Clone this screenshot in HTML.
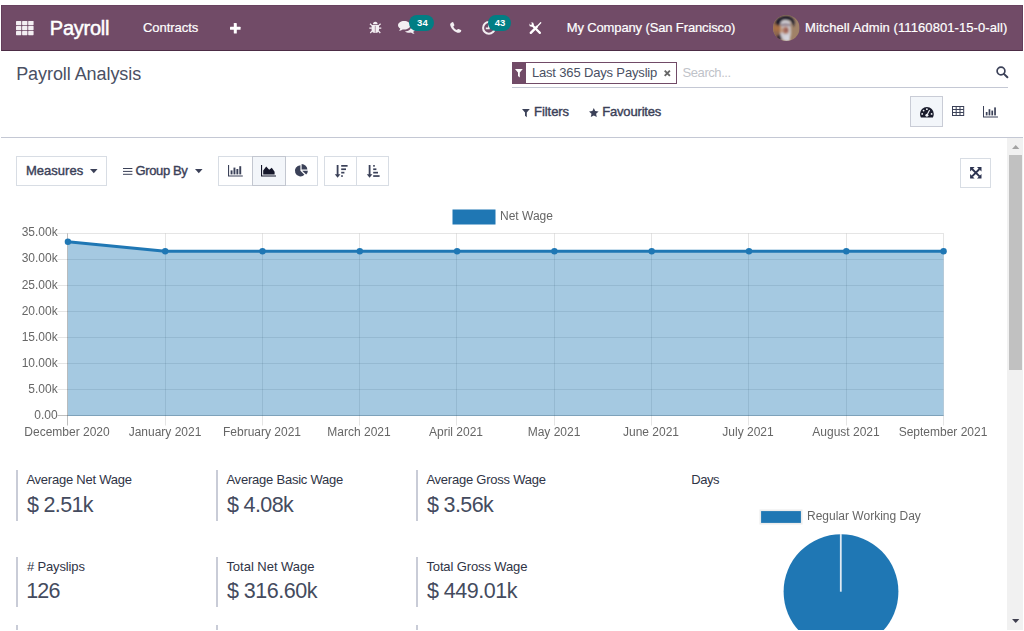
<!DOCTYPE html>
<html><head><meta charset="utf-8"><title>Payroll Analysis</title>
<style>
html,body{margin:0;padding:0;background:#fff;}
body{width:1024px;height:631px;position:relative;overflow:hidden;font-family:"Liberation Sans",sans-serif;}
.t{position:absolute;white-space:pre;font-family:"Liberation Sans",sans-serif;}
.a{position:absolute;}
svg{position:absolute;overflow:visible;}
.c{font-size:12px;line-height:14px;color:#666;will-change:transform;}
.bar{width:2px;background:#c9ccd7;}
#root{position:absolute;left:0;top:0;width:1024px;height:631px;overflow:hidden;background:#fff;}

</style></head>
<body>
<div id="root">
<!-- NAVBAR -->
<div class="a" style="left:1px;top:5px;width:1022px;height:46px;background:#714b67;border:1px solid #643e5b;border-top-color:#68425f;border-bottom-color:#4c2c45;box-sizing:border-box"></div>
<!-- apps grid -->
<svg style="left:15.7px;top:20.8px" width="17.6" height="14.2" viewBox="0 0 17.6 14.2" fill="#f3eef2">
<rect x="0" y="0" width="5.3" height="4.2" rx=".6"/><rect x="6.1" y="0" width="5.3" height="4.2" rx=".6"/><rect x="12.2" y="0" width="5.4" height="4.2" rx=".6"/>
<rect x="0" y="5" width="5.3" height="4.2" rx=".6"/><rect x="6.1" y="5" width="5.3" height="4.2" rx=".6"/><rect x="12.2" y="5" width="5.4" height="4.2" rx=".6"/>
<rect x="0" y="10" width="5.3" height="4.2" rx=".6"/><rect x="6.1" y="10" width="5.3" height="4.2" rx=".6"/><rect x="12.2" y="10" width="5.4" height="4.2" rx=".6"/>
</svg>
<!-- plus -->
<svg style="left:230.3px;top:22.8px" width="10.6" height="10.4" viewBox="0 0 10.6 10.4" fill="#fff">
<rect x="3.8" y="0" width="3" height="10.4" rx=".5"/><rect x="0" y="3.7" width="10.6" height="3" rx=".5"/>
</svg>
<!-- bug -->
<svg style="left:368.6px;top:21.4px" width="12.6" height="13" viewBox="0 0 12.6 13" fill="#f3eef2" stroke="#f3eef2">
<path d="M4 3.3 A2.3 2.6 0 0 1 8.6 3.3 Z" stroke="none"/>
<path d="M2.6 4 H10 V8.4 A3.7 3.6 0 0 1 2.6 8.4 Z" stroke="none"/>
<path d="M6.3 4.8 V11.8" stroke="#a98a9c" stroke-width="0.9"/>
<path d="M2.8 7.2 H0.3 M9.8 7.2 H12.3 M3 4.6 L1 2.7 M9.6 4.6 L11.6 2.7 M3.2 9.8 L1.3 12 M9.4 9.8 L11.3 12" stroke-width="1.2" fill="none"/>
</svg>
<!-- comments -->
<svg style="left:397.5px;top:21px" width="17.5" height="13.5" viewBox="0 0 17.5 13.5" fill="#f3eef2">
<path d="M6.2 0 C9.6 0 12.3 1.9 12.3 4.3 C12.3 6.7 9.6 8.6 6.2 8.6 C5.6 8.6 5.1 8.5 4.6 8.4 C3.6 9.2 2.3 9.7 0.9 9.8 C1.6 9.2 2.1 8.4 2.3 7.6 C0.9 6.8 0 5.6 0 4.3 C0 1.9 2.8 0 6.2 0 Z"/>
<path d="M13.6 3.6 C15.9 4.2 17.5 5.7 17.5 7.5 C17.5 8.8 16.6 10 15.2 10.8 C15.4 11.6 15.9 12.4 16.6 13 C15.2 12.9 13.9 12.4 12.9 11.6 C12.4 11.7 11.9 11.8 11.3 11.8 C9.6 11.8 8 11.3 6.9 10.5 C10.6 10.3 13.7 7.8 13.7 4.5 C13.7 4.2 13.7 3.9 13.6 3.6 Z"/>
</svg>
<!-- badge 34 -->
<div class="a" style="left:409px;top:15px;width:25px;height:16px;border-radius:8px;background:#017e84"></div>
<!-- phone -->
<svg style="left:449.8px;top:22.2px" width="11.4" height="11" viewBox="0 0 11.4 11" fill="#f3eef2">
<path d="M2.4 0.2 C2.8 0 3.1 0.1 3.3 0.5 L4.3 2.7 C4.5 3.1 4.4 3.4 4.1 3.7 L3.3 4.4 C4 6 5.2 7.3 6.9 8.1 L7.6 7.3 C7.9 7 8.2 6.9 8.6 7.1 L10.9 8.1 C11.3 8.3 11.4 8.6 11.2 9 C10.8 9.9 10.1 10.6 9.2 10.8 C8.3 11 7.4 10.8 6.4 10.3 C3.6 9 1.7 7 0.6 4.2 C0.2 3.3 0 2.6 0.2 1.9 C0.5 1.1 1.4 0.6 2.4 0.2 Z"/>
</svg>
<!-- clock -->
<svg style="left:481.6px;top:20.5px" width="13.8" height="13.8" viewBox="0 0 13.8 13.8" fill="none" stroke="#f3eef2">
<circle cx="6.9" cy="6.9" r="5.8" stroke-width="2"/>
<path d="M6.9 3.6 V7.4 H3.8" stroke-width="1.6"/>
</svg>
<!-- badge 43 -->
<div class="a" style="left:488px;top:15px;width:23px;height:16px;border-radius:8px;background:#017e84"></div>
<!-- studio tools -->
<svg style="left:528.8px;top:21.8px" width="12.4" height="12.4" viewBox="0 0 12.4 12.4" fill="none" stroke="#fff">
<path d="M3 3 L10.9 10.9" stroke-width="2.2" stroke-linecap="round"/>
<circle cx="2.5" cy="2.5" r="2.3" fill="#fff" stroke="none"/>
<path d="M-0.4 -0.4 L2.7 0.6 L2.7 2.7 L0.6 2.7 Z" fill="#714b67" stroke="none"/>
<path d="M11.7 0.8 L8.4 4.2" stroke-width="1.3" stroke-linecap="round"/>
<path d="M7.8 4.8 L1.8 10.8" stroke-width="2.4" stroke-linecap="round"/>
</svg>
<!-- avatar -->
<svg style="left:773.4px;top:15px" width="26.6" height="26" viewBox="0 0 26.6 26">
<defs><clipPath id="av"><ellipse cx="13.3" cy="13" rx="13.3" ry="13"/></clipPath>
<filter id="bl" x="-20%" y="-20%" width="140%" height="140%"><feGaussianBlur stdDeviation="0.9"/></filter></defs>
<g clip-path="url(#av)">
<rect width="26.6" height="26" fill="#a08267"/>
<g filter="url(#bl)">
<path d="M0 6 H8 V26 H0 Z" fill="#90684f"/>
<ellipse cx="3.5" cy="13" rx="3" ry="3.5" fill="#a87045"/>
<path d="M2 8 C4 0 20 -2 21.5 7 L21 12 L17.5 5.5 L10 5 L7.5 9 L5 11 Z" fill="#1b1a2c"/>
<path d="M7.5 8 C8 4 17 4 17.5 8 L18 17 C18 22 16 26 13 26 C9 26 7 21 7 16 Z" fill="#cfcdd3"/>
<path d="M8 9.6 C10 8.4 15 8.4 17.5 9.8 L17.5 11 C15 10 10 10 8 11 Z" fill="#5d3f55"/>
<ellipse cx="12.6" cy="15.2" rx="3.4" ry="3.8" fill="#b07a62"/>
<ellipse cx="13.2" cy="15" rx="1.3" ry="1.6" fill="#8a4a58"/>
<path d="M6.8 11 H8.6 V18 H6.8 Z" fill="#c08a5e"/>
<path d="M11.5 20.5 H17 V26 H11.5 Z" fill="#d5d6de"/>
<path d="M2 22 L7 19 L9 24 L6 26 Z" fill="#3a2a3a"/>
</g>
</g>
</svg>

<!-- CONTROL PANEL -->
<!-- search facet -->
<div class="a" style="left:512px;top:62px;width:165px;height:21.5px;box-sizing:border-box;border:1px solid #714b67;background:#fff"></div>
<div class="a" style="left:512px;top:62px;width:13.7px;height:21.5px;background:#714b67"></div>
<svg style="left:515px;top:69.2px" width="7.8" height="8.4" viewBox="0 0 7.8 8.4" fill="#fff"><path d="M0 0 H7.8 L4.8 3.6 V8.4 L3 6.9 V3.6 Z"/></svg>
<svg style="left:664.3px;top:70.2px" width="6.6" height="6.6" viewBox="0 0 6.6 6.6" stroke="#666" stroke-width="1.9" fill="none"><path d="M.7 .7 L5.9 5.9 M5.9 .7 L.7 5.9"/></svg>
<div class="a" style="left:512px;top:87px;width:496px;height:1px;background:#c4c8d4"></div>
<!-- search icon -->
<svg style="left:995.6px;top:65.6px" width="12.4" height="12.2" viewBox="0 0 12.4 12.2" fill="none" stroke="#3b4158"><circle cx="5" cy="5" r="3.9" stroke-width="1.7"/><path d="M7.9 7.9 L11.4 11.3" stroke-width="2" stroke-linecap="round"/></svg>
<!-- filters funnel -->
<svg style="left:522px;top:108.7px" width="7.8" height="8.2" viewBox="0 0 7.8 8.2" fill="#3b4158"><path d="M0 0 H7.8 L4.8 3.5 V8.2 L3 6.8 V3.5 Z"/></svg>
<!-- star -->
<svg style="left:588.6px;top:107.6px" width="9.6" height="9" viewBox="0 0 9.6 9" fill="#3b4158"><path d="M4.8 0 L6.2 3.1 L9.6 3.5 L7.1 5.8 L7.8 9 L4.8 7.4 L1.8 9 L2.5 5.8 L0 3.5 L3.4 3.1 Z"/></svg>
<!-- view switcher -->
<div class="a" style="left:910px;top:96px;width:33px;height:31px;box-sizing:border-box;border:1px solid #c9ccd6;background:#f3f6fa"></div>
<svg style="left:919.6px;top:106.6px" width="13.8" height="10.4" viewBox="0 0 13.8 10.4">
<path d="M0 6.9 A6.9 6.9 0 0 1 13.8 6.9 C13.8 8.2 13.5 9.4 12.9 10.4 H0.9 C0.3 9.4 0 8.2 0 6.9 Z" fill="#1a1c2c"/>
<circle cx="2.2" cy="6.9" r=".9" fill="#f3f6fa"/><circle cx="3.6" cy="3.6" r=".9" fill="#f3f6fa"/><circle cx="6.9" cy="2.2" r=".9" fill="#f3f6fa"/><circle cx="11.6" cy="6.9" r=".9" fill="#f3f6fa"/>
<path d="M9.6 3 L7.3 7.4" stroke="#f3f6fa" stroke-width="1.1"/><circle cx="6.9" cy="8.2" r="1.5" fill="#f3f6fa"/>
</svg>
<!-- list/table icon -->
<svg style="left:952px;top:106px" width="12.2" height="10" viewBox="0 0 12.2 10" fill="none" stroke="#3b4158" stroke-width="1"><rect x=".5" y=".5" width="11.2" height="9"/><path d="M.5 3.5 H11.7 M.5 6.5 H11.7 M4.2 .5 V9.5 M8 .5 V9.5"/></svg>
<!-- bar chart icon -->
<svg style="left:983px;top:105.6px" width="15" height="11.4" viewBox="0 0 15 11.4" fill="#3b4158"><path d="M0 0 H1 V10.4 H15 V11.4 H0 Z"/><rect x="2.8" y="6" width="1.7" height="3.4"/><rect x="5.6" y="3.2" width="1.7" height="6.2"/><rect x="8.4" y="4.6" width="1.7" height="4.8"/><rect x="11.2" y="1.4" width="1.7" height="8"/></svg>
<!-- cp bottom border -->
<div class="a" style="left:1px;top:137px;width:1022px;height:1px;background:#c4c8d4"></div>

<!-- BUTTON ROW -->
<div class="a" style="left:16px;top:156px;width:91px;height:30px;box-sizing:border-box;border:1px solid #d8dde4;background:#fff"></div>
<svg style="left:90px;top:168.6px" width="7.6" height="4.2" viewBox="0 0 7.6 4.2" fill="#3b4158"><path d="M0 0 H7.6 L3.8 4.2 Z"/></svg>
<svg style="left:122.8px;top:167.8px" width="9.4" height="7" viewBox="0 0 9.4 7" fill="#3b4158"><rect y="0" width="9.4" height="1"/><rect y="2.9" width="9.4" height="1"/><rect y="5.8" width="9.4" height="1"/></svg>
<svg style="left:194.6px;top:168.6px" width="7.6" height="4.2" viewBox="0 0 7.6 4.2" fill="#3b4158"><path d="M0 0 H7.6 L3.8 4.2 Z"/></svg>
<!-- group 1 -->
<div class="a" style="left:218px;top:156px;width:100px;height:30px;box-sizing:border-box;border:1px solid #d8dde4;background:#fff"></div>
<div class="a" style="left:252px;top:156px;width:34px;height:30px;box-sizing:border-box;border:1px solid #c3c7d0;background:#f3f6fa"></div>
<!-- bar icon -->
<svg style="left:227.8px;top:164.6px" width="14.8" height="11.6" viewBox="0 0 14.8 11.6" fill="#3b4158"><path d="M0 0 H1.1 V10.5 H14.8 V11.6 H0 Z"/><rect x="2.6" y="5.4" width="1.9" height="4"/><rect x="5.5" y="2.6" width="1.9" height="6.8"/><rect x="8.4" y="4" width="1.9" height="5.4"/><rect x="11.3" y="1.2" width="1.9" height="8.2"/></svg>
<!-- area icon -->
<svg style="left:261.3px;top:164.6px" width="15" height="11.6" viewBox="0 0 15 11.6" fill="#15172a"><path d="M0 0 H1.1 V10.5 H15 V11.6 H0 Z"/><path d="M2.2 9.6 V5.6 L5.2 1.6 L8.2 4.8 L10.8 2.8 L13.6 6.8 V9.6 Z"/></svg>
<!-- pie icon -->
<svg style="left:295.2px;top:164.2px" width="13" height="12.4" viewBox="0 0 13 12.4" fill="#3b4158"><path d="M5.4 1.2 V6.8 L9.4 10.8 A5.6 5.6 0 1 1 5.4 1.2 Z"/><path d="M6.6 0 A5.8 5.8 0 0 1 12.4 5.6 H6.6 Z"/><path d="M7.2 6.8 H12.9 A5.8 5.8 0 0 1 11.2 10.6 Z"/></svg>
<!-- group 2 -->
<div class="a" style="left:324px;top:156px;width:65px;height:30px;box-sizing:border-box;border:1px solid #d8dde4;background:#fff"></div>
<div class="a" style="left:356px;top:157px;width:1px;height:28px;background:#d8dde4"></div>
<!-- sort desc -->
<svg style="left:334.5px;top:164.6px" width="12.6" height="12.6" viewBox="0 0 12.6 12.6" fill="#3b4158"><path d="M1.7 0 H3.5 V9.3 H5.4 L2.6 12.7 L-0.2 9.3 H1.7 Z"/><rect x="6.2" y="0" width="6.4" height="1.7"/><rect x="6.2" y="3.4" width="4.8" height="1.7"/><rect x="6.2" y="6.8" width="3.2" height="1.7"/><rect x="6.2" y="10.2" width="1.6" height="1.7"/></svg>
<!-- sort asc -->
<svg style="left:366.6px;top:164.6px" width="12.6" height="12.6" viewBox="0 0 12.6 12.6" fill="#3b4158"><path d="M1.7 0 H3.5 V9.3 H5.4 L2.6 12.7 L-0.2 9.3 H1.7 Z"/><rect x="6.2" y="0" width="1.6" height="1.7"/><rect x="6.2" y="3.4" width="3.2" height="1.7"/><rect x="6.2" y="6.8" width="4.8" height="1.7"/><rect x="6.2" y="10.2" width="6.4" height="1.7"/></svg>
<!-- expand button -->
<div class="a" style="left:960px;top:158px;width:31px;height:30px;box-sizing:border-box;border:1px solid #d8dde4;background:#fff"></div>
<svg style="left:969.7px;top:166.8px" width="11.6" height="11.4" viewBox="0 0 11.4 11.4" fill="#2c3350" stroke="#2c3350"><path d="M2 2 L9.4 9.4 M9.4 2 L2 9.4" stroke-width="1.9" fill="none"/><path d="M0 0 H4.5 L0 4.5 Z M11.4 0 V4.5 L6.9 0 Z M0 11.4 V6.9 L4.5 11.4 Z M11.4 11.4 H6.9 L11.4 6.9 Z" stroke="none"/></svg>

<svg style="left:0;top:0" width="1006" height="460" viewBox="0 0 1006 460">
<path d="M57.5 415.50 H943.5" stroke="rgba(0,0,0,0.25)" stroke-width="1" fill="none"/>
<path d="M57.5 389.50 H943.5" stroke="rgba(0,0,0,0.1)" stroke-width="1" fill="none"/>
<path d="M57.5 363.50 H943.5" stroke="rgba(0,0,0,0.1)" stroke-width="1" fill="none"/>
<path d="M57.5 337.50 H943.5" stroke="rgba(0,0,0,0.1)" stroke-width="1" fill="none"/>
<path d="M57.5 311.50 H943.5" stroke="rgba(0,0,0,0.1)" stroke-width="1" fill="none"/>
<path d="M57.5 285.50 H943.5" stroke="rgba(0,0,0,0.1)" stroke-width="1" fill="none"/>
<path d="M57.5 259.50 H943.5" stroke="rgba(0,0,0,0.1)" stroke-width="1" fill="none"/>
<path d="M57.5 233.50 H943.5" stroke="rgba(0,0,0,0.1)" stroke-width="1" fill="none"/>
<path d="M67.50 233.5 V425.5" stroke="rgba(0,0,0,0.25)" stroke-width="1" fill="none"/>
<path d="M165.50 233.5 V425.5" stroke="rgba(0,0,0,0.1)" stroke-width="1" fill="none"/>
<path d="M262.50 233.5 V425.5" stroke="rgba(0,0,0,0.1)" stroke-width="1" fill="none"/>
<path d="M359.50 233.5 V425.5" stroke="rgba(0,0,0,0.1)" stroke-width="1" fill="none"/>
<path d="M456.50 233.5 V425.5" stroke="rgba(0,0,0,0.1)" stroke-width="1" fill="none"/>
<path d="M554.50 233.5 V425.5" stroke="rgba(0,0,0,0.1)" stroke-width="1" fill="none"/>
<path d="M651.50 233.5 V425.5" stroke="rgba(0,0,0,0.1)" stroke-width="1" fill="none"/>
<path d="M748.50 233.5 V425.5" stroke="rgba(0,0,0,0.1)" stroke-width="1" fill="none"/>
<path d="M846.50 233.5 V425.5" stroke="rgba(0,0,0,0.1)" stroke-width="1" fill="none"/>
<path d="M943.50 233.5 V425.5" stroke="rgba(0,0,0,0.1)" stroke-width="1" fill="none"/>
<polygon points="67.9,416 67.9,241.7 165.2,251.3 262.5,251.3 359.8,251.3 457.1,251.3 554.4,251.3 651.7,251.3 749.0,251.3 846.3,251.3 943.6,251.3 943.6,416" fill="rgba(31,119,180,0.4)"/>
<polyline points="67.9,241.7 165.2,251.3 262.5,251.3 359.8,251.3 457.1,251.3 554.4,251.3 651.7,251.3 749.0,251.3 846.3,251.3 943.6,251.3" fill="none" stroke="#1f77b4" stroke-width="3" stroke-linejoin="round"/>
<circle cx="67.9" cy="241.7" r="3.2" fill="#1f77b4"/>
<circle cx="165.2" cy="251.3" r="3.2" fill="#1f77b4"/>
<circle cx="262.5" cy="251.3" r="3.2" fill="#1f77b4"/>
<circle cx="359.8" cy="251.3" r="3.2" fill="#1f77b4"/>
<circle cx="457.1" cy="251.3" r="3.2" fill="#1f77b4"/>
<circle cx="554.4" cy="251.3" r="3.2" fill="#1f77b4"/>
<circle cx="651.7" cy="251.3" r="3.2" fill="#1f77b4"/>
<circle cx="749.0" cy="251.3" r="3.2" fill="#1f77b4"/>
<circle cx="846.3" cy="251.3" r="3.2" fill="#1f77b4"/>
<circle cx="943.6" cy="251.3" r="3.2" fill="#1f77b4"/>
<rect x="452.5" y="209.5" width="43" height="15" fill="#1f77b4"/>
</svg>
<span class="t c" style="left:7px;width:120px;text-align:center;top:424.5px">December 2020</span>
<span class="t c" style="left:105px;width:120px;text-align:center;top:424.5px">January 2021</span>
<span class="t c" style="left:202px;width:120px;text-align:center;top:424.5px">February 2021</span>
<span class="t c" style="left:299px;width:120px;text-align:center;top:424.5px">March 2021</span>
<span class="t c" style="left:396px;width:120px;text-align:center;top:424.5px">April 2021</span>
<span class="t c" style="left:494px;width:120px;text-align:center;top:424.5px">May 2021</span>
<span class="t c" style="left:591px;width:120px;text-align:center;top:424.5px">June 2021</span>
<span class="t c" style="left:688px;width:120px;text-align:center;top:424.5px">July 2021</span>
<span class="t c" style="left:786px;width:120px;text-align:center;top:424.5px">August 2021</span>
<span class="t c" style="left:883px;width:120px;text-align:center;top:424.5px">September 2021</span>
<span class="t c" style="left:0;width:57.7px;text-align:right;top:408.0px">0.00</span>
<span class="t c" style="left:0;width:57.7px;text-align:right;top:381.9px">5.00k</span>
<span class="t c" style="left:0;width:57.7px;text-align:right;top:355.8px">10.00k</span>
<span class="t c" style="left:0;width:57.7px;text-align:right;top:329.7px">15.00k</span>
<span class="t c" style="left:0;width:57.7px;text-align:right;top:303.6px">20.00k</span>
<span class="t c" style="left:0;width:57.7px;text-align:right;top:277.5px">25.00k</span>
<span class="t c" style="left:0;width:57.7px;text-align:right;top:251.4px">30.00k</span>
<span class="t c" style="left:0;width:57.7px;text-align:right;top:225.3px">35.00k</span>
<span class="t c" style="left:500.4px;top:209px">Net Wage</span>
<div class="a bar" style="left:16px;top:470px;height:51px"></div>
<div class="a bar" style="left:216px;top:470px;height:51px"></div>
<div class="a bar" style="left:416px;top:470px;height:51px"></div>
<div class="a bar" style="left:16px;top:557px;height:50px"></div>
<div class="a bar" style="left:216px;top:557px;height:50px"></div>
<div class="a bar" style="left:416px;top:557px;height:50px"></div>
<div class="a bar" style="left:16px;top:625px;height:6px"></div>
<div class="a bar" style="left:216px;top:625px;height:6px"></div>
<div class="a bar" style="left:416px;top:625px;height:6px"></div>

<svg style="left:750px;top:500px" width="180" height="131" viewBox="750 500 180 131">
<rect x="760.3" y="510.3" width="41.4" height="13.4" fill="#1f77b4" stroke="#ececec" stroke-width="1.6"/>
<circle cx="841" cy="591.7" r="57.4" fill="#1f77b4"/>
<path d="M840.8 534 V591.7" stroke="#dfe9f2" stroke-width="1.8"/>
</svg>
<span class="t c" style="left:807.3px;top:509px">Regular Working Day</span>

<div class="a" style="left:1007px;top:138px;width:16px;height:492px;background:#f1f1f1"></div>
<div class="a" style="left:1009px;top:155px;width:13px;height:215px;background:#c1c1c1"></div>
<svg style="left:1011.8px;top:145px" width="7.4" height="4" viewBox="0 0 8 4.4" fill="#a3a3a3"><path d="M0 4.4 L4 0 L8 4.4 Z"/></svg>
<svg style="left:1011.8px;top:619.2px" width="7.4" height="4" viewBox="0 0 8 4.4" fill="#404050"><path d="M0 0 H8 L4 4.4 Z"/></svg>
<div class="a" style="left:0;top:630px;width:1024px;height:1px;background:#fff;z-index:50"></div>
<div class="a" style="left:1023px;top:0;width:1px;height:631px;background:#fff;z-index:50"></div>


<span class="t" style="left:49.8px;top:18.17px;font-size:20px;line-height:20px;color:#ffffff;letter-spacing:-0.24px;-webkit-text-stroke:0.5px #ffffff">Payroll</span>
<span class="t" style="left:143px;top:21.1px;font-size:13px;line-height:13px;color:#ffffff;letter-spacing:-0.04px;-webkit-text-stroke:0.2px #ffffff">Contracts</span>
<span class="t" style="left:417px;top:17.96px;font-size:9.5px;line-height:9.5px;color:#ffffff;letter-spacing:0.12px;font-weight:700">34</span>
<span class="t" style="left:494.8px;top:17.96px;font-size:9.5px;line-height:9.5px;color:#ffffff;letter-spacing:-0.18px;font-weight:700">43</span>
<span class="t" style="left:566.7px;top:21.2px;font-size:13px;line-height:13px;color:#ffffff;letter-spacing:-0.13px;-webkit-text-stroke:0.2px #ffffff">My Company (San Francisco)</span>
<span class="t" style="left:805px;top:21.2px;font-size:13px;line-height:13px;color:#ffffff;letter-spacing:0.08px;-webkit-text-stroke:0.2px #ffffff">Mitchell Admin (11160801-15-0-all)</span>
<span class="t" style="left:16.2px;top:64.56px;font-size:18px;line-height:18px;color:#4a5063;letter-spacing:-0.07px">Payroll Analysis</span>
<span class="t" style="left:531.9px;top:66.2px;font-size:13px;line-height:13px;color:#4a5063;letter-spacing:-0.16px">Last 365 Days Payslip</span>
<span class="t" style="left:682.6px;top:66.2px;font-size:13px;line-height:13px;color:#bfc3c9;letter-spacing:-0.44px">Search...</span>
<span class="t" style="left:534px;top:104.8px;font-size:13px;line-height:13px;color:#3b4158;letter-spacing:-0.05px;-webkit-text-stroke:0.4px #3b4158">Filters</span>
<span class="t" style="left:602.2px;top:104.8px;font-size:13px;line-height:13px;color:#3b4158;letter-spacing:-0.17px;-webkit-text-stroke:0.4px #3b4158">Favourites</span>
<span class="t" style="left:26px;top:164.0px;font-size:13px;line-height:13px;color:#3b4158;letter-spacing:0.02px;-webkit-text-stroke:0.4px #3b4158">Measures</span>
<span class="t" style="left:135.5px;top:164.0px;font-size:13px;line-height:13px;color:#3b4158;letter-spacing:-0.37px;-webkit-text-stroke:0.4px #3b4158">Group By</span>
<span class="t" style="left:26.4px;top:473.0px;font-size:13px;line-height:13px;color:#2f3446;letter-spacing:-0.24px">Average Net Wage</span>
<span class="t" style="left:26.9px;top:495.2px;font-size:21.5px;line-height:21.5px;color:#444b5e;letter-spacing:-0.64px">$ 2.51k</span>
<span class="t" style="left:226.4px;top:473.0px;font-size:13px;line-height:13px;color:#2f3446;letter-spacing:-0.22px">Average Basic Wage</span>
<span class="t" style="left:226.9px;top:495.2px;font-size:21.5px;line-height:21.5px;color:#444b5e;letter-spacing:-0.61px">$ 4.08k</span>
<span class="t" style="left:426.4px;top:473.0px;font-size:13px;line-height:13px;color:#2f3446;letter-spacing:-0.23px">Average Gross Wage</span>
<span class="t" style="left:426.9px;top:495.2px;font-size:21.5px;line-height:21.5px;color:#444b5e;letter-spacing:-0.61px">$ 3.56k</span>
<span class="t" style="left:26.9px;top:560.1px;font-size:13px;line-height:13px;color:#2f3446;letter-spacing:-0.13px"># Payslips</span>
<span class="t" style="left:26.2px;top:581.3px;font-size:21.5px;line-height:21.5px;color:#444b5e;letter-spacing:-0.84px">126</span>
<span class="t" style="left:226.4px;top:560.1px;font-size:13px;line-height:13px;color:#2f3446;letter-spacing:-0.02px">Total Net Wage</span>
<span class="t" style="left:226.9px;top:581.3px;font-size:21.5px;line-height:21.5px;color:#444b5e;letter-spacing:-0.48px">$ 316.60k</span>
<span class="t" style="left:426.4px;top:560.1px;font-size:13px;line-height:13px;color:#2f3446;letter-spacing:-0.12px">Total Gross Wage</span>
<span class="t" style="left:426.9px;top:581.3px;font-size:21.5px;line-height:21.5px;color:#444b5e;letter-spacing:-0.48px">$ 449.01k</span>
<span class="t" style="left:691.3px;top:473.0px;font-size:13px;line-height:13px;color:#2f3446;letter-spacing:-0.47px">Days</span>
<span class="t" style="left:26.4px;top:628.0px;font-size:13px;line-height:13px;color:#2f3446;letter-spacing:0.03px">Work Days</span>
<span class="t" style="left:226.4px;top:628.0px;font-size:13px;line-height:13px;color:#2f3446;letter-spacing:0.24px">Total Basic Wage</span>
<span class="t" style="left:426.4px;top:628.0px;font-size:13px;line-height:13px;color:#2f3446;letter-spacing:1.17px">Total Net Wage</span>
</div>
</body></html>
